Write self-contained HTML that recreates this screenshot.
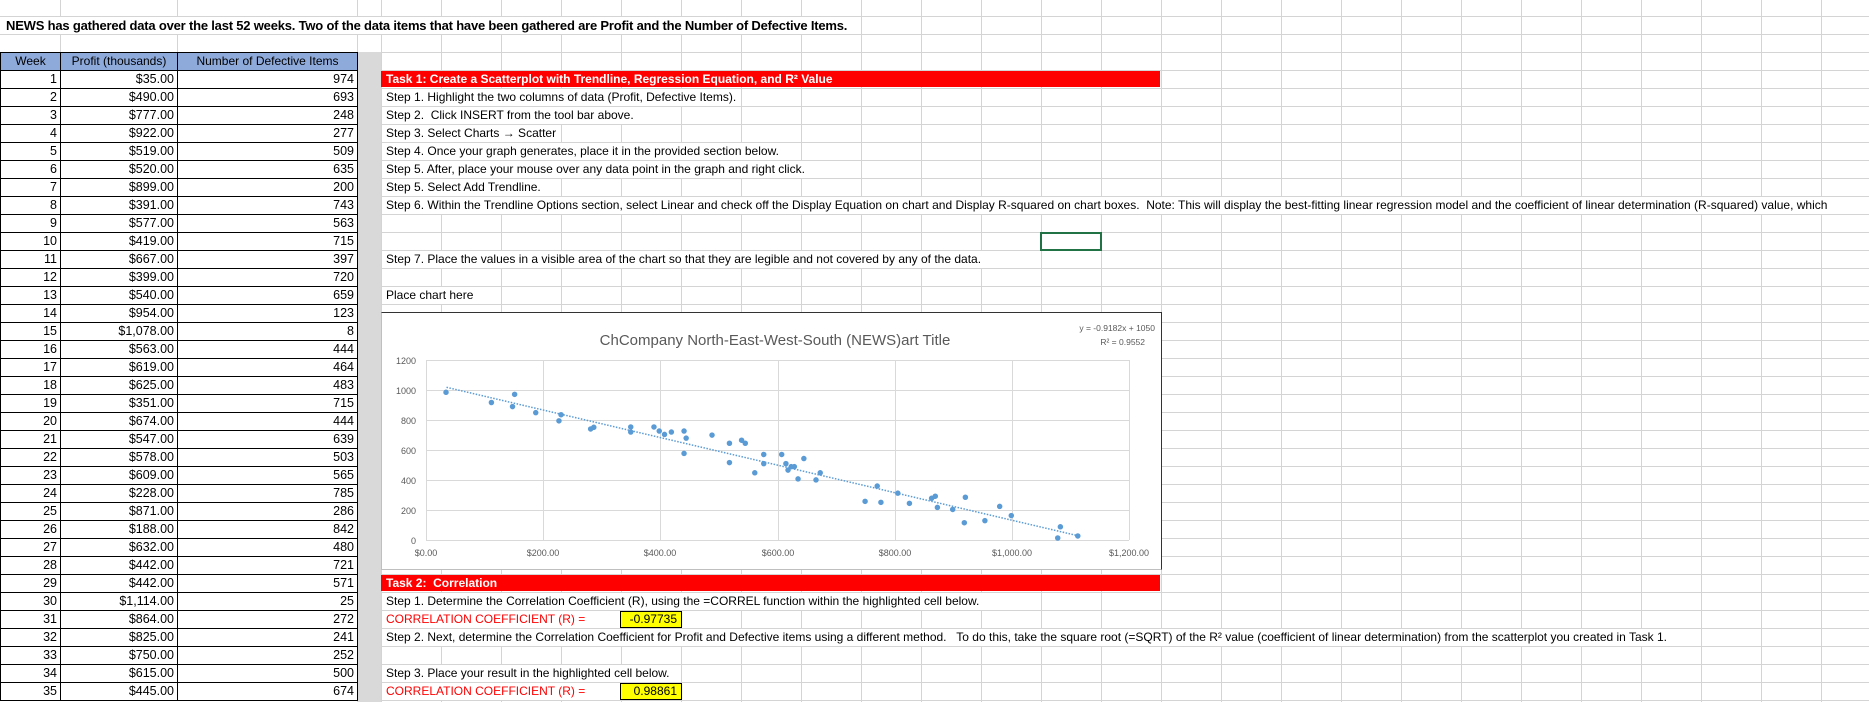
<!DOCTYPE html>
<html><head><meta charset="utf-8"><style>
body{margin:0;width:1869px;height:702px;overflow:hidden;position:relative;background:#fff;font-family:"Liberation Sans",sans-serif;font-size:12px;color:#000}
.grid{position:absolute;left:381px;top:0;width:1488px;height:702px;
background-image:repeating-linear-gradient(to right,#d4d4d4 0 1px,transparent 1px 60px),repeating-linear-gradient(to bottom,transparent 0 16px,#d4d4d4 16px 17px,transparent 17px 18px);}
.lgrid{position:absolute;left:0;top:0;width:381px;height:52px;
background-image:repeating-linear-gradient(to bottom,transparent 0 16px,#d4d4d4 16px 17px,transparent 17px 18px);}
.vl{position:absolute;top:0;width:1px;height:52px;background:#d4d4d4}
.gray{position:absolute;left:357px;top:52px;width:24px;height:650px;background:#d9d9d9}
.title{position:absolute;left:6px;top:17px;height:17px;line-height:17px;font-weight:bold;font-size:13px;background:#fff;padding-right:4px;letter-spacing:-0.2px}
table{position:absolute;left:0;top:52px;border-collapse:collapse;table-layout:fixed}
td{border:1px solid #000;height:17px;padding:0 3px;font-size:12.5px;line-height:17px;text-align:right;white-space:nowrap}
tr.h td{background:#8eaadb;text-align:center;font-size:12px}
.t{position:absolute;left:383px;height:17px;line-height:17px;font-size:12px;white-space:nowrap;background:#fff;padding:0 3px}
.red{position:absolute;left:381px;width:779px;height:16px;background:#ff0000;color:#fff;font-weight:bold;font-size:12px;line-height:16px;padding-left:5px;box-sizing:border-box}
.rc{color:#ff0000}
.y{position:absolute;left:620px;width:62px;height:17px;background:#ffff00;border:1px solid #000;box-sizing:border-box;text-align:right;padding-right:4px;line-height:15px;font-size:12px}
.sel{position:absolute;left:1040px;top:232px;width:62px;height:19px;border:2px solid #217346;box-sizing:border-box}
.chart{position:absolute;left:381px;top:312px;width:781px;height:258px;background:#fff;border:1px solid #bfbfbf;border-top:1.5px solid #333;border-right:1.5px solid #333;box-sizing:border-box}
</style></head><body>
<div class="grid"></div>
<div class="lgrid"></div>
<div class="vl" style="left:60px"></div><div class="vl" style="left:177px"></div><div class="vl" style="left:357px"></div>
<div class="gray"></div>
<div class="title">NEWS has gathered data over the last 52 weeks. Two of the data items that have been gathered are Profit and the Number of Defective Items.</div>
<table>
<colgroup><col style="width:60px"><col style="width:117px"><col style="width:180px"></colgroup>
<tr class="h"><td>Week</td><td>Profit (thousands)</td><td>Number of Defective Items</td></tr>
<tr><td>1</td><td>$35.00</td><td>974</td></tr>
<tr><td>2</td><td>$490.00</td><td>693</td></tr>
<tr><td>3</td><td>$777.00</td><td>248</td></tr>
<tr><td>4</td><td>$922.00</td><td>277</td></tr>
<tr><td>5</td><td>$519.00</td><td>509</td></tr>
<tr><td>6</td><td>$520.00</td><td>635</td></tr>
<tr><td>7</td><td>$899.00</td><td>200</td></tr>
<tr><td>8</td><td>$391.00</td><td>743</td></tr>
<tr><td>9</td><td>$577.00</td><td>563</td></tr>
<tr><td>10</td><td>$419.00</td><td>715</td></tr>
<tr><td>11</td><td>$667.00</td><td>397</td></tr>
<tr><td>12</td><td>$399.00</td><td>720</td></tr>
<tr><td>13</td><td>$540.00</td><td>659</td></tr>
<tr><td>14</td><td>$954.00</td><td>123</td></tr>
<tr><td>15</td><td>$1,078.00</td><td>8</td></tr>
<tr><td>16</td><td>$563.00</td><td>444</td></tr>
<tr><td>17</td><td>$619.00</td><td>464</td></tr>
<tr><td>18</td><td>$625.00</td><td>483</td></tr>
<tr><td>19</td><td>$351.00</td><td>715</td></tr>
<tr><td>20</td><td>$674.00</td><td>444</td></tr>
<tr><td>21</td><td>$547.00</td><td>639</td></tr>
<tr><td>22</td><td>$578.00</td><td>503</td></tr>
<tr><td>23</td><td>$609.00</td><td>565</td></tr>
<tr><td>24</td><td>$228.00</td><td>785</td></tr>
<tr><td>25</td><td>$871.00</td><td>286</td></tr>
<tr><td>26</td><td>$188.00</td><td>842</td></tr>
<tr><td>27</td><td>$632.00</td><td>480</td></tr>
<tr><td>28</td><td>$442.00</td><td>721</td></tr>
<tr><td>29</td><td>$442.00</td><td>571</td></tr>
<tr><td>30</td><td>$1,114.00</td><td>25</td></tr>
<tr><td>31</td><td>$864.00</td><td>272</td></tr>
<tr><td>32</td><td>$825.00</td><td>241</td></tr>
<tr><td>33</td><td>$750.00</td><td>252</td></tr>
<tr><td>34</td><td>$615.00</td><td>500</td></tr>
<tr><td>35</td><td>$445.00</td><td>674</td></tr>
</table>

<div class="red" style="top:71px">Task 1: Create a Scatterplot with Trendline, Regression Equation, and R² Value</div>
<div class="t" style="top:89px">Step 1. Highlight the two columns of data (Profit, Defective Items).</div>
<div class="t" style="top:107px">Step 2.&nbsp; Click INSERT from the tool bar above.</div>
<div class="t" style="top:125px">Step 3. Select Charts → Scatter</div>
<div class="t" style="top:143px">Step 4. Once your graph generates, place it in the provided section below.</div>
<div class="t" style="top:161px">Step 5. After, place your mouse over any data point in the graph and right click.</div>
<div class="t" style="top:179px">Step 5. Select Add Trendline.</div>
<div class="t" style="top:197px">Step 6. Within the Trendline Options section, select Linear and check off the Display Equation on chart and Display R-squared on chart boxes.&nbsp; Note: This will display the best-fitting linear regression model and the coefficient of linear determination (R-squared) value, which</div>
<div class="sel"></div>
<div class="t" style="top:251px">Step 7. Place the values in a visible area of the chart so that they are legible and not covered by any of the data.</div>
<div class="t" style="top:287px">Place chart here</div>

<div class="chart"></div>
<svg style="position:absolute;left:0;top:0" width="1869" height="702">
<g stroke="#d9d9d9" stroke-width="1">
<line x1="426" y1="360.5" x2="1129" y2="360.5"/><line x1="426" y1="390.5" x2="1129" y2="390.5"/><line x1="426" y1="420.5" x2="1129" y2="420.5"/><line x1="426" y1="450.5" x2="1129" y2="450.5"/><line x1="426" y1="480.5" x2="1129" y2="480.5"/><line x1="426" y1="510.5" x2="1129" y2="510.5"/><line x1="426" y1="540.5" x2="1129" y2="540.5"/>
<line x1="426.5" y1="360" x2="426.5" y2="540"/><line x1="543.5" y1="360" x2="543.5" y2="540"/><line x1="660.5" y1="360" x2="660.5" y2="540"/><line x1="778.5" y1="360" x2="778.5" y2="540"/><line x1="895.5" y1="360" x2="895.5" y2="540"/><line x1="1012.5" y1="360" x2="1012.5" y2="540"/><line x1="1129.5" y1="360" x2="1129.5" y2="540"/>
</g>
<g font-size="9" fill="#595959" text-anchor="end">
<text x="416" y="364">1200</text><text x="416" y="394">1000</text><text x="416" y="424">800</text><text x="416" y="454">600</text><text x="416" y="484">400</text><text x="416" y="514">200</text><text x="416" y="544">0</text>
</g>
<g font-size="9" fill="#595959" text-anchor="middle">
<text x="426" y="556">$0.00</text><text x="543" y="556">$200.00</text><text x="660" y="556">$400.00</text><text x="778" y="556">$600.00</text><text x="895" y="556">$800.00</text><text x="1012" y="556">$1,000.00</text><text x="1129" y="556">$1,200.00</text>
</g>
<text x="775" y="345" font-size="15" fill="#595959" text-anchor="middle">ChCompany North-East-West-South (NEWS)art Title</text>
<text x="1155" y="331" font-size="8.5" fill="#595959" text-anchor="end">y = -0.9182x + 1050</text>
<text x="1145" y="345" font-size="8.5" fill="#595959" text-anchor="end">R² = 0.9552</text>
<line x1="446.5" y1="387.3" x2="1078.6" y2="535.9" stroke="#5b9bd5" stroke-width="1.5" stroke-dasharray="1.5 1.5"/>
<g transform="translate(358.4,297.9) scale(0.5278,0.3396)">
<path vector-effect="non-scaling-stroke" stroke="#5b9bd5" stroke-width="5.5" stroke-linecap="round" fill="none" d="M166 278h0M252 308h0M292 320h0M296 284h0M336 338h0M380 362h0M384 344h0M440 386h0M446 381h0M516 380h0M516 395h0M560 380h0M570 392h0M580 402h0M593 395h0M617 392h0M617 458h0M621 413h0M670 404h0M703 428h0M703 485h0M726 419h0M733 428h0M751 515h0M768 461h0M768 488h0M802 461h0M810 488h0M814 507h0M820 497h0M826 497h0M833 533h0M844 473h0M867 536h0M875 515h0M960 599h0M983 554h0M990 602h0M1022 575h0M1044 605h0M1086 590h0M1093 584h0M1097 617h0M1126 623h0M1150 587h0M1148 662h0M1187 656h0M1215 614h0M1237 641h0M1325 707h0M1330 674h0M1363 701h0"/>
</g>
</svg>

<div class="red" style="top:575px">Task 2:&nbsp; Correlation</div>
<div class="t" style="top:593px">Step 1. Determine the Correlation Coefficient (R), using the =CORREL function within the highlighted cell below.</div>
<div class="t rc" style="top:611px">CORRELATION COEFFICIENT (R) =</div>
<div class="y" style="top:611px">-0.97735</div>
<div class="t" style="top:629px">Step 2. Next, determine the Correlation Coefficient for Profit and Defective items using a different method.&nbsp;&nbsp; To do this, take the square root (=SQRT) of the R² value (coefficient of linear determination) from the scatterplot you created in Task 1.</div>
<div class="t" style="top:665px">Step 3. Place your result in the highlighted cell below.</div>
<div class="t rc" style="top:683px">CORRELATION COEFFICIENT (R) =</div>
<div class="y" style="top:683px">0.98861</div>
</body></html>
